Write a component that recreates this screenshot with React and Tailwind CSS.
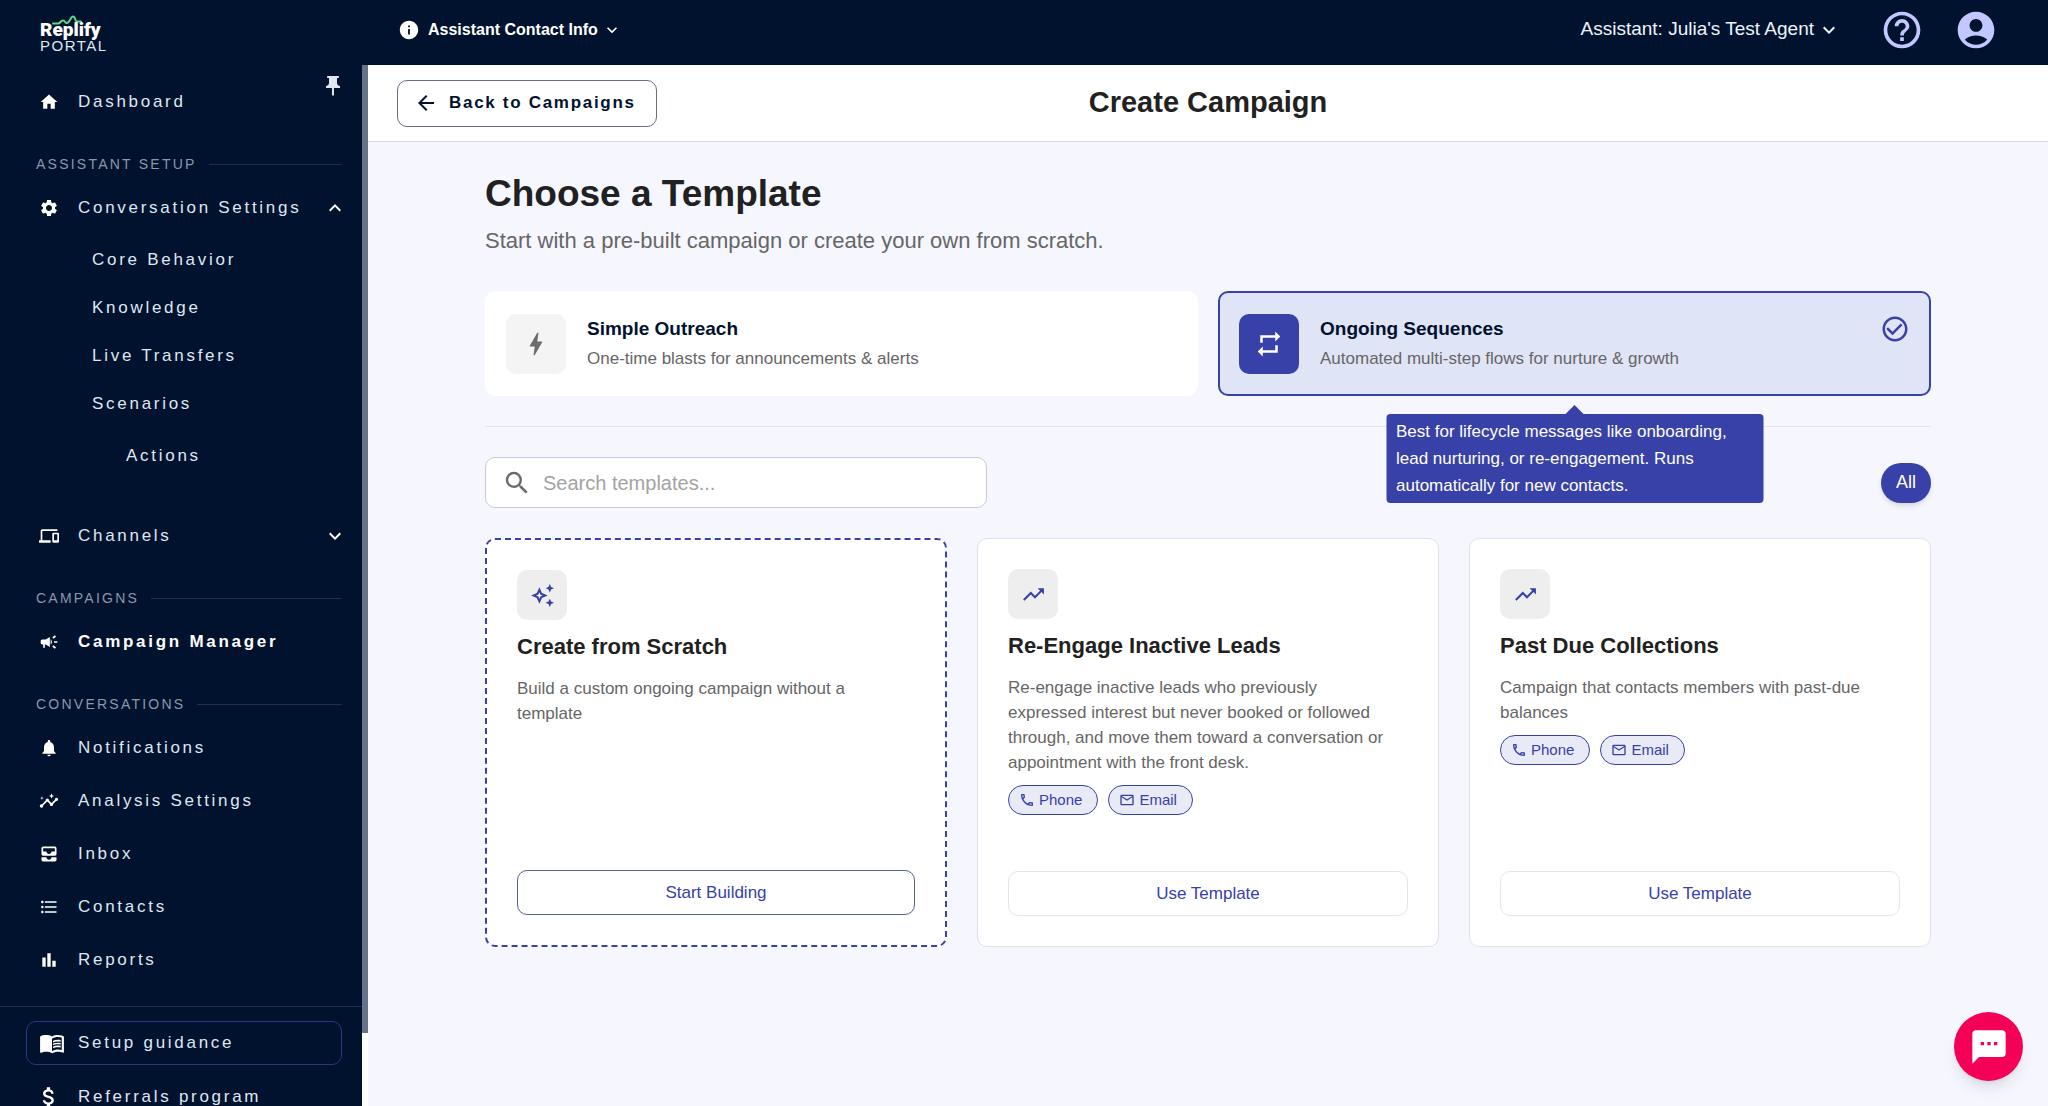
import React, { useState } from "react";
import {
  MdAccountCircle,
  MdAllInbox,
  MdArrowBack,
  MdAttachMoney,
  MdBarChart,
  MdBolt,
  MdCampaign,
  MdCheckCircleOutline,
  MdDevices,
  MdExpandLess,
  MdExpandMore,
  MdFormatListBulleted,
  MdHelpOutline,
  MdHome,
  MdInfo,
  MdInsights,
  MdMenuBook,
  MdNotifications,
  MdOutlineAutoAwesome,
  MdOutlineEmail,
  MdOutlineLocalPhone,
  MdPushPin,
  MdRepeat,
  MdSearch,
  MdSettings,
  MdTextsms,
  MdTrendingUp,
} from "react-icons/md";

const conversationLinks = [
  { label: "Notifications", icon: MdNotifications },
  { label: "Analysis Settings", icon: MdInsights },
  { label: "Inbox", icon: MdAllInbox },
  { label: "Contacts", icon: MdFormatListBulleted },
  { label: "Reports", icon: MdBarChart },
];

const templates = [
  {
    title: "Re-Engage Inactive Leads",
    description:
      "Re-engage inactive leads who previously expressed interest but never booked or followed through, and move them toward a conversation or appointment with the front desk.",
  },
  {
    title: "Past Due Collections",
    description: "Campaign that contacts members with past-due balances",
  },
];

const Logo = () => (
  <a href="#home" className="flex flex-col pt-2 pl-10 w-[368px] shrink-0 text-white">
    <svg viewBox="0 0 30 10" className="w-[30px] h-[10px] ml-3 -mb-[5px]" fill="none">
      <path
        d="M1 8.5h5c2.500 0 2.500-3 5-3s2 3 4 2.500C18 7.500 18.500 1.500 21 1.500s2 5 4 5h4"
        stroke="#5fd88a"
        strokeWidth="2"
        strokeLinecap="round"
      />
    </svg>
    <span className="font-['Roboto',sans-serif] font-black text-[19px] leading-5">Replify</span>
    <span className="text-[15px] leading-3 tracking-widest text-[#dfe7f2]">PORTAL</span>
  </a>
);

const NavItem = ({ label, icon: Icon, active, trailing }) => (
  <a
    href="#nav"
    className={`flex items-center h-[52px] pl-[39px] pr-5 text-[17px] tracking-[0.16em] ${
      active ? "font-bold text-white" : "text-[#dfe7f2]"
    }`}
  >
    <Icon className="w-5 h-5 mr-[19px] shrink-0 text-white" />
    <span className="flex-1 whitespace-nowrap">{label}</span>
    {trailing}
  </a>
);

const SubItem = ({ label }) => (
  <a
    href="#nav"
    className="flex items-center h-12 pl-[92px] text-[17px] tracking-[0.16em] text-[#dfe7f2]"
  >
    {label}
  </a>
);

const SectionTitle = ({ children }) => (
  <div className="flex items-center gap-3 h-[54px] pt-[18px] pl-9 pr-5">
    <h2 className="text-[14px] tracking-[0.16em] text-[#8c97ab]">{children}</h2>
    <div className="flex-1 h-px bg-[#1c2f4e]" />
  </div>
);

const Sidebar = () => (
  <aside className="flex w-[368px] shrink-0 overflow-hidden">
    <nav className="flex-1 pt-[11px] bg-[#00122e]">
      <NavItem
        label="Dashboard"
        icon={MdHome}
        trailing={<MdPushPin className="w-6 h-6 mb-8 -mr-[3px] text-[#dfe7f2]" />}
      />

      <SectionTitle>ASSISTANT SETUP</SectionTitle>
      <NavItem
        label="Conversation Settings"
        icon={MdSettings}
        trailing={<MdExpandLess className="w-6 h-6 -mr-[5px] text-white" />}
      />
      <div className="pt-[2px]">
        <SubItem label="Core Behavior" />
        <SubItem label="Knowledge" />
        <SubItem label="Live Transfers" />
        <SubItem label="Scenarios" />
        <a
          href="#nav"
          className="flex items-center h-[52px] mt-[2px] mb-7 pl-[126px] text-[17px] tracking-[0.16em] text-[#dfe7f2]"
        >
          Actions
        </a>
      </div>
      <NavItem
        label="Channels"
        icon={MdDevices}
        trailing={<MdExpandMore className="w-6 h-6 -mr-[5px] text-white" />}
      />

      <SectionTitle>CAMPAIGNS</SectionTitle>
      <NavItem label="Campaign Manager" icon={MdCampaign} active />

      <SectionTitle>CONVERSATIONS</SectionTitle>
      <div className="flex flex-col gap-px">
        {conversationLinks.map((link) => (
          <NavItem key={link.label} label={link.label} icon={link.icon} />
        ))}
      </div>

      <div className="mt-5 pt-[14px] border-t border-[#1c2f4e]">
        <a
          href="#guide"
          className="flex items-center h-11 ml-[26px] mr-5 pl-3 rounded-[10px] border border-[#263a86] text-[17px] tracking-[0.16em] text-[#dfe7f2]"
        >
          <MdMenuBook className="w-[26px] h-[26px] mr-[13px] text-white" />
          Setup guidance
        </a>
        <a
          href="#referrals"
          className="flex items-center h-[52px] mt-[6px] pl-9 text-[17px] tracking-[0.16em] text-[#dfe7f2]"
        >
          <MdAttachMoney className="w-[26px] h-[26px] mr-4 text-white" />
          Referrals program
        </a>
      </div>
    </nav>
    {/* Scroll track */}
    <div className="w-[6px] bg-white">
      <div className="h-[93%] bg-[#667487]" />
    </div>
  </aside>
);

const TopBar = () => (
  <header className="flex items-center h-[65px] shrink-0 pr-[50px] pb-[6px] bg-[#00122e] text-white">
    <Logo />
    <button type="button" className="flex items-center ml-[30px] text-[16px] font-bold">
      <MdInfo className="w-[22px] h-[22px] mr-2" />
      Assistant Contact Info
      <MdExpandMore className="w-5 h-5 ml-1" />
    </button>
    <div className="flex-1" />
    <button type="button" className="flex items-center text-[19px] text-[#eef3fa]">
      Assistant: Julia's Test Agent
      <MdExpandMore className="w-6 h-6 ml-[3px]" />
    </button>
    <button type="button" aria-label="Help" className="ml-[39px]">
      <MdHelpOutline className="w-11 h-11 text-[#c2c8ff]" />
    </button>
    <button type="button" aria-label="Account" className="ml-[30px]">
      <MdAccountCircle className="w-11 h-11 text-[#c2c8ff]" />
    </button>
  </header>
);

const TypeCard = ({ title, text, icon: Icon, selected, onClick, children }) => (
  <div className="relative">
    <button
      type="button"
      aria-pressed={selected}
      onClick={onClick}
      className={`flex items-center w-full h-[105px] px-[19px] gap-[21px] rounded-[10px] border-2 text-left ${
        selected ? "bg-[#e0e4f7] border-[#3841a8]" : "bg-white border-white"
      }`}
    >
      <span
        className={`flex items-center justify-center w-[60px] h-[60px] rounded-[10px] ${
          selected ? "bg-[#3841a8] text-white" : "bg-[#f4f4f4] text-[#6b6b6b]"
        }`}
      >
        <Icon className="w-[30px] h-[30px]" />
      </span>
      <span className="flex-1">
        <span className="block text-[19px] leading-[30px] font-bold text-[#00122e]">{title}</span>
        <span className="block text-[17px] leading-[30px] text-[#666666]">{text}</span>
      </span>
      {selected && <MdCheckCircleOutline className="w-[30px] h-[30px] mb-[30px] text-[#3841a8]" />}
    </button>
    {children}
  </div>
);

const Tooltip = ({ children }) => (
  <div
    role="tooltip"
    className="absolute z-10 top-full left-1/2 -translate-x-1/2 mt-[18px] w-[377px] px-[10px] py-1 rounded bg-[#3841a8] text-[17px] leading-[27px] text-white"
  >
    <div className="absolute -top-[9px] left-1/2 -translate-x-1/2 border-x-[9px] border-b-[9px] border-x-transparent border-b-[#3841a8]" />
    {children}
  </div>
);

const Channel = ({ label, icon: Icon }) => (
  <span className="flex items-center h-[30px] pl-[10px] pr-[15px] gap-1 rounded-full border border-[#3841a8] bg-[#e8eaf6] text-[15px] text-[#3841a8]">
    <Icon className="w-4 h-4" />
    {label}
  </span>
);

const TemplateCard = ({ title, description, icon: Icon, action, custom }) => (
  <article
    className={`flex flex-col min-h-[409px] p-[30px] rounded-[10px] bg-white ${
      custom ? "border-2 border-dashed border-[#3841a8]" : "border border-[#e0e2ea]"
    }`}
  >
    <div className="flex items-center justify-center w-[50px] h-[50px] rounded-[10px] bg-[#eeeeee]">
      <Icon className="w-[25px] h-[25px] text-[#3841a8]" />
    </div>
    <h3 className="mt-3 text-[22px] leading-[30px] font-bold text-[#212121]">{title}</h3>
    <p className="mt-[14px] pr-4 text-[17px] leading-[25px] text-[#666666]">{description}</p>
    {!custom && (
      <div className="flex gap-[10px] mt-[10px]">
        <Channel label="Phone" icon={MdOutlineLocalPhone} />
        <Channel label="Email" icon={MdOutlineEmail} />
      </div>
    )}
    <button
      type="button"
      className={`h-[45px] mt-auto rounded-[10px] border text-[17px] text-[#3841a8] ${
        custom ? "border-[#56628a]" : "border-[#e6e6ea]"
      }`}
    >
      {action}
    </button>
  </article>
);

const App = () => {
  const [type, setType] = useState("ongoing");
  const [search, setSearch] = useState("");

  const visible = templates.filter((t) => t.title.toLowerCase().includes(search.toLowerCase()));

  return (
    <div className="flex flex-col h-screen overflow-hidden font-['Liberation_Sans',Arial,sans-serif]">
      <TopBar />

      <div className="flex flex-1 min-h-0">
        <Sidebar />

        <main className="flex-1 min-w-0 bg-[#f5f6fe]">
          {/* Page header */}
          <div className="grid grid-cols-[1fr_auto_1fr] items-center h-[77px] px-[29px] bg-white border-b border-[#d5d9e0]">
            <button
              type="button"
              className="flex items-center justify-self-start h-[47px] pl-4 pr-5 gap-[11px] rounded-[10px] border border-[#667080] text-[17px] font-bold tracking-widest text-[#00122e]"
            >
              <MdArrowBack className="w-6 h-6" />
              Back to Campaigns
            </button>
            <h1 className="text-[29px] font-bold text-[#212121]">Create Campaign</h1>
          </div>

          <div className="max-w-[1506px] mx-auto px-[30px] pt-[30px]">
            <h2 className="text-[37px] leading-[44px] font-bold text-[#212121]">Choose a Template</h2>
            <p className="mt-[10px] text-[22px] leading-[30px] text-[#666666]">
              Start with a pre-built campaign or create your own from scratch.
            </p>

            {/* Campaign type */}
            <div className="grid grid-cols-2 gap-5 mt-[35px] pb-[30px] border-b border-[#e0e3f0]">
              <TypeCard
                title="Simple Outreach"
                text="One-time blasts for announcements & alerts"
                icon={MdBolt}
                selected={type === "simple"}
                onClick={() => setType("simple")}
              />
              <TypeCard
                title="Ongoing Sequences"
                text="Automated multi-step flows for nurture & growth"
                icon={MdRepeat}
                selected={type === "ongoing"}
                onClick={() => setType("ongoing")}
              >
                <Tooltip>
                  Best for lifecycle messages like onboarding, lead nurturing, or re-engagement. Runs
                  automatically for new contacts.
                </Tooltip>
              </TypeCard>
            </div>

            {/* Search and filter */}
            <div className="flex items-center justify-between mt-[30px]">
              <label className="flex items-center w-[502px] h-[51px] px-4 gap-[11px] rounded-[10px] border border-[#c9ccd6] bg-white">
                <MdSearch className="w-[30px] h-[30px] shrink-0 text-[#6b6b6b]" />
                <input
                  type="text"
                  aria-label="Search templates"
                  placeholder="Search templates..."
                  value={search}
                  onChange={(e) => setSearch(e.target.value)}
                  className="w-full text-[20px] text-[#212121] placeholder:text-[#a3a3a3] outline-none"
                />
              </label>
              <button
                type="button"
                className="h-10 px-[15px] rounded-full bg-[#3841a8] text-[18px] text-white shadow-md"
              >
                All
              </button>
            </div>

            {/* Templates */}
            <div className="grid grid-cols-3 gap-[30px] mt-[30px]">
              <TemplateCard
                title="Create from Scratch"
                description="Build a custom ongoing campaign without a template"
                icon={MdOutlineAutoAwesome}
                action="Start Building"
                custom
              />
              {visible.map((template) => (
                <TemplateCard
                  key={template.title}
                  title={template.title}
                  description={template.description}
                  icon={MdTrendingUp}
                  action="Use Template"
                />
              ))}
            </div>
          </div>
        </main>
      </div>

      <button
        type="button"
        aria-label="Open chat"
        className="fixed right-[25px] bottom-[25px] flex items-center justify-center w-[69px] h-[69px] rounded-full bg-[#f50057] text-white shadow-lg"
      >
        <MdTextsms className="w-10 h-10" />
      </button>
    </div>
  );
};

export default App;
